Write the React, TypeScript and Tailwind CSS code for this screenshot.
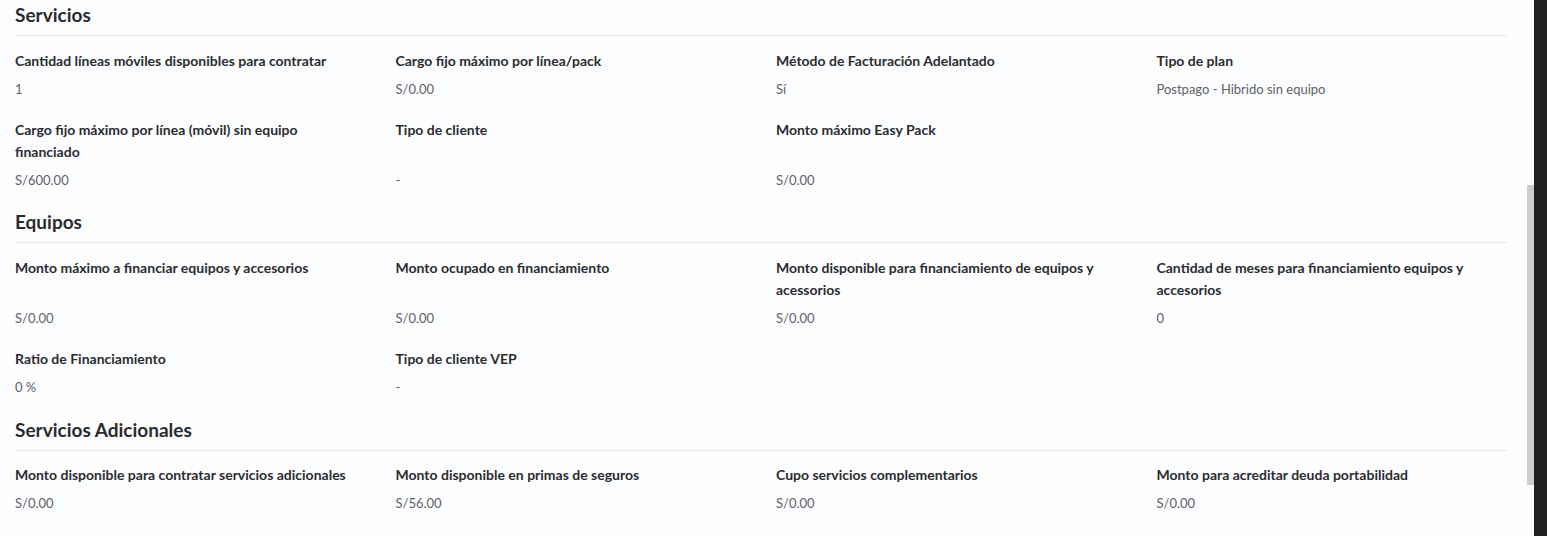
import React from "react";

type Item = { label: string; value: string };
type Section = { title: string; gapAfter: string; gridTop: string; rows: Item[][] };

const sections: Section[] = [
  {
    title: "Servicios",
    gapAfter: "mb-[19px]",
    gridTop: "mt-[14px]",
    rows: [
      [
        { label: "Cantidad líneas móviles disponibles para contratar", value: "1" },
        { label: "Cargo fijo máximo por línea/pack", value: "S/0.00" },
        { label: "Método de Facturación Adelantado", value: "Sí" },
        { label: "Tipo de plan", value: "Postpago - Hibrido sin equipo" },
      ],
      [
        { label: "Cargo fijo máximo por línea (móvil) sin equipo financiado", value: "S/600.00" },
        { label: "Tipo de cliente", value: "-" },
        { label: "Monto máximo Easy Pack", value: "S/0.00" },
      ],
    ],
  },
  {
    title: "Equipos",
    gapAfter: "mb-[20px]",
    gridTop: "mt-[14px]",
    rows: [
      [
        { label: "Monto máximo a financiar equipos y accesorios", value: "S/0.00" },
        { label: "Monto ocupado en financiamiento", value: "S/0.00" },
        { label: "Monto disponible para financiamiento de equipos y acessorios", value: "S/0.00" },
        { label: "Cantidad de meses para financiamiento equipos y accesorios", value: "0" },
      ],
      [
        { label: "Ratio de Financiamiento", value: "0 %" },
        { label: "Tipo de cliente VEP", value: "-" },
      ],
    ],
  },
  {
    title: "Servicios Adicionales",
    gapAfter: "mb-[19px]",
    gridTop: "mt-[13px]",
    rows: [
      [
        { label: "Monto disponible para contratar servicios adicionales", value: "S/0.00" },
        { label: "Monto disponible en primas de seguros", value: "S/56.00" },
        { label: "Cupo servicios complementarios", value: "S/0.00" },
        { label: "Monto para acreditar deuda portabilidad", value: "S/0.00" },
      ],
    ],
  },
];

export default function App() {
  return (
    <div
      className="flex h-[536px] w-full overflow-hidden bg-[#fcfdff]"
      style={{ fontFamily: "Lato, 'Noto Sans', sans-serif" }}
    >
      <div className="flex-1 pl-[15px] pr-[20px] pt-[3px]">
        {sections.map((s) => (
          <div key={s.title} className={s.gapAfter}>
            <h2 className="border-b border-[#e4e6ea] pb-[8px] text-[19px] leading-[24px] font-bold text-[#2a2b2e]">
              {s.title}
            </h2>
            <div className={`${s.gridTop} flex flex-col gap-[19px]`}>
              {s.rows.map((row, i) => (
                <div key={i} className="grid grid-cols-4 gap-x-[30px]">
                  {row.map((it) => (
                    <div key={it.label} className="flex flex-col justify-between">
                      <div className="text-[14px] leading-[22px] font-bold text-[#2b2c2f]">{it.label}</div>
                      <div className="mt-[6px] text-[13px] leading-[22px] text-[#5f6166]">{it.value}</div>
                    </div>
                  ))}
                </div>
              ))}
            </div>
          </div>
        ))}
      </div>
      <div className="flex w-[7px] flex-col bg-[#fcfdff]">
        <div className="h-[185px]" />
        <div className="h-[300px] bg-[#cdcdcd]" />
      </div>
      <div className="w-[13px] bg-[#202020]" />
    </div>
  );
}
